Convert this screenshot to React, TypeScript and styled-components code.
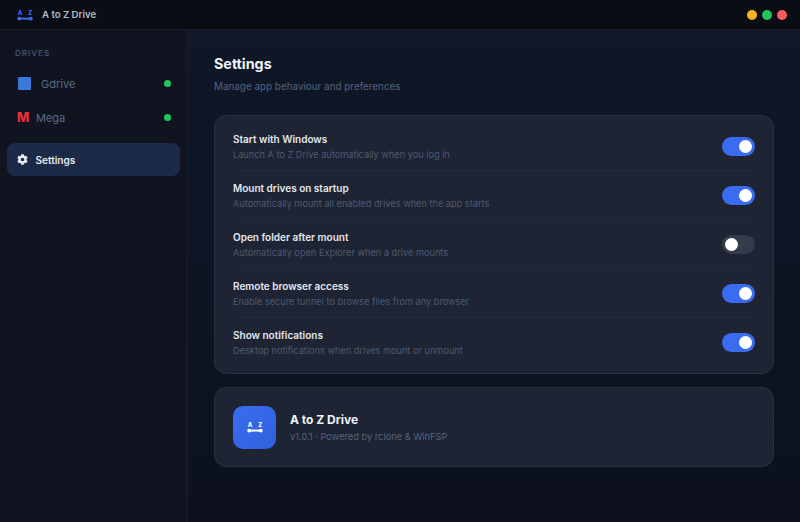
import React from "react";
import styled, { createGlobalStyle } from "styled-components";
import { FaCog } from "react-icons/fa";

const Global = createGlobalStyle`
  html, body { margin: 0; padding: 0; background: #0d1220; }
  #root { width: 800px; height: 522px; overflow: hidden; }
  * { box-sizing: border-box; }
`;

const Shell = styled.div`
  width: 800px;
  height: 522px;
  display: flex;
  flex-direction: column;
  font-family: Inter, "Noto Sans", sans-serif;
  background: #0d1220;
`;
const TitleBar = styled.header`
  height: 30px;
  flex: none;
  display: flex;
  align-items: center;
  padding: 0 13px 0 17px;
  background: #0a0d14;
  border-bottom: 1px solid #171c29;
`;
const TitleText = styled.span`
  margin-left: 9px;
  font-size: 9.6px;
  font-weight: 600;
  color: #b4bccb;
`;
const Lights = styled.div`
  margin-left: auto;
  display: flex;
  gap: 5px;
`;
const Light = styled.span<{ $c: string }>`
  width: 10px;
  height: 10px;
  border-radius: 50%;
  background: ${(p) => p.$c};
`;
const Body = styled.div`
  flex: 1;
  display: flex;
  min-height: 0;
`;
const Sidebar = styled.aside`
  width: 188px;
  flex: none;
  padding: 18px 7px 0;
  background: #0f1420;
  border-right: 1px solid #1a2030;
`;
const SideLabel = styled.div`
  padding-left: 8px;
  font-size: 8px;
  line-height: 10px;
  font-weight: 600;
  letter-spacing: 1px;
  color: #475066;
`;
const DriveRow = styled.div<{ $gap: number; $left: number }>`
  height: 34px;
  display: flex;
  align-items: center;
  padding: 0 9px 0 ${(p) => p.$left}px;
  gap: ${(p) => p.$gap}px;
  font-size: 11px;
  color: #5d6a85;
`;
const DriveName = styled.span`
  padding-top: 2px;
`;
const GdriveIcon = styled.span`
  width: 13px;
  height: 13px;
  border-radius: 1px;
  background: #3b78dc;
`;
const MegaIcon = styled.span`
  width: 12px;
  font-size: 13px;
  font-weight: 800;
  color: #e8303c;
  line-height: 1;
`;
const Dot = styled.span`
  margin-left: auto;
  width: 7px;
  height: 7px;
  border-radius: 50%;
  background: #22c55e;
`;
const Rows = styled.div`
  margin-top: 8px;
`;
const NavItem = styled.div`
  margin-top: 9px;
  height: 33px;
  display: flex;
  align-items: center;
  gap: 8px;
  padding-left: 9.5px;
  border-radius: 8px;
  background: #1d2a47;
  font-size: 10px;
  font-weight: 600;
  color: #e6ebf3;
  svg { flex: none; }
`;
const Main = styled.main`
  flex: 1;
  padding: 24px 26px 0;
  background: linear-gradient(180deg, #0f1728, #0c111d);
`;
const Heading = styled.h1`
  margin: 0;
  font-size: 14.3px;
  line-height: 20px;
  font-weight: 700;
  color: #f1f4f9;
`;
const Sub = styled.p`
  margin: 5px 0 0;
  font-size: 9.9px;
  line-height: 14px;
  color: #55627c;
`;
const Card = styled.section`
  background: #1e2433;
  border: 1px solid #2a3040;
  border-radius: 12px;
`;
const SettingsCard = styled(Card)`
  margin-top: 22px;
  padding: 6px 18px;
`;
const Row = styled.div`
  height: 49px;
  display: flex;
  align-items: center;
  justify-content: space-between;
  border-bottom: 1px solid #242a3a;
  &:last-child { border-bottom-color: transparent; }
`;
const RowText = styled.div`
  padding-top: 2px;
`;
const RowTitle = styled.div`
  font-size: 10px;
  line-height: 13px;
  font-weight: 600;
  color: #e4e8f0;
`;
const RowDesc = styled.div`
  margin-top: 3px;
  font-size: 9.2px;
  line-height: 12px;
  color: #4d5a72;
`;
const Toggle = styled.span<{ $on: boolean }>`
  width: 33px;
  height: 19px;
  flex: none;
  border-radius: 10px;
  padding: 3px;
  display: flex;
  justify-content: ${(p) => (p.$on ? "flex-end" : "flex-start")};
  background: ${(p) => (p.$on ? "#3b6cf0" : "#343b4a")};
`;
const Knob = styled.span`
  width: 13px;
  height: 13px;
  border-radius: 50%;
  background: #fff;
`;
const AboutCard = styled(Card)`
  margin-top: 13px;
  height: 80px;
  display: flex;
  align-items: center;
  gap: 14px;
  padding: 0 18px;
`;
const AppIcon = styled.div`
  width: 43px;
  height: 43px;
  border-radius: 10px;
  display: flex;
  align-items: center;
  justify-content: center;
  background: linear-gradient(135deg, #3a6ff0, #2f5fdc);
`;
const AppName = styled.div`
  font-size: 12px;
  line-height: 16px;
  font-weight: 700;
  color: #f1f4f9;
`;
const AppMeta = styled.div`
  margin-top: 3px;
  font-size: 9.25px;
  line-height: 12px;
  color: #55627c;
`;

const Logo = ({ color }: { color: string }) => (
  <svg width={16} height={12} viewBox="0 0 16 12" fill="none">
    <text x="0.8" y="6" fontSize="5.8" fontWeight="800" fontFamily="Inter, sans-serif" fill={color}>A</text>
    <text x="11.2" y="6" fontSize="5.8" fontWeight="800" fontFamily="Inter, sans-serif" fill={color}>Z</text>
    <path d="M3 9.6h10" stroke={color} strokeWidth="2" />
    <circle cx="2.2" cy="9.6" r="1.9" fill={color} />
    <circle cx="13.8" cy="9.6" r="1.9" fill={color} />
  </svg>
);

const settings = [
  { t: "Start with Windows", d: "Launch A to Z Drive automatically when you log in", on: true },
  { t: "Mount drives on startup", d: "Automatically mount all enabled drives when the app starts", on: true },
  { t: "Open folder after mount", d: "Automatically open Explorer when a drive mounts", on: false },
  { t: "Remote browser access", d: "Enable secure tunnel to browse files from any browser", on: true },
  { t: "Show notifications", d: "Desktop notifications when drives mount or unmount", on: true },
];

export default function App() {
  return (
    <Shell>
      <Global />
      <TitleBar>
        <Logo color="#3b6cf0" />
        <TitleText>A to Z Drive</TitleText>
        <Lights>
          <Light $c="#fbb124" />
          <Light $c="#22c55e" />
          <Light $c="#f85c5c" />
        </Lights>
      </TitleBar>
      <Body>
        <Sidebar>
          <SideLabel>DRIVES</SideLabel>
          <Rows>
            <DriveRow $gap={10} $left={11}><GdriveIcon /><DriveName>Gdrive</DriveName><Dot /></DriveRow>
            <DriveRow $gap={7} $left={10}><MegaIcon>M</MegaIcon><DriveName>Mega</DriveName><Dot /></DriveRow>
          </Rows>
          <NavItem><FaCog size={11} />Settings</NavItem>
        </Sidebar>
        <Main>
          <Heading>Settings</Heading>
          <Sub>Manage app behaviour and preferences</Sub>
          <SettingsCard>
            {settings.map((s) => (
              <Row key={s.t}>
                <RowText>
                  <RowTitle>{s.t}</RowTitle>
                  <RowDesc>{s.d}</RowDesc>
                </RowText>
                <Toggle $on={s.on}><Knob /></Toggle>
              </Row>
            ))}
          </SettingsCard>
          <AboutCard>
            <AppIcon><Logo color="#fff" /></AppIcon>
            <div>
              <AppName>A to Z Drive</AppName>
              <AppMeta>v1.0.1 · Powered by rclone &amp; WinFSP</AppMeta>
            </div>
          </AboutCard>
        </Main>
      </Body>
    </Shell>
  );
}
